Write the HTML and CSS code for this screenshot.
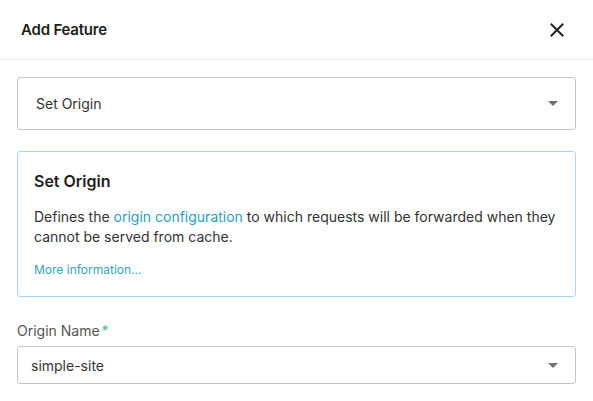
FILE: index.html
```html
<!DOCTYPE html>
<html>
<head>
<meta charset="utf-8">
<link rel="stylesheet" href="styles.css">
</head>
<body>
<div class="dialog">
  <div class="header">
    <span class="title">Add Feature</span>
    <button class="close" aria-label="Close">
      <svg width="14" height="14" viewBox="0 0 14 14"><path d="M1.5 1.5 L12.5 12.5 M12.5 1.5 L1.5 12.5" stroke="#222" stroke-width="2" stroke-linecap="square"/></svg>
    </button>
  </div>
  <div class="content">
    <div class="select big">
      <span>Set Origin</span>
      <span class="arrow"></span>
    </div>
    <div class="card">
      <div class="card-title">Set Origin</div>
      <p class="card-text">Defines the <a class="link">origin configuration</a> to which requests will be forwarded when they cannot be served from cache.</p>
      <a class="more">More information...</a>
    </div>
    <div class="field">
      <label class="label">Origin Name<span class="req">*</span></label>
      <div class="select small">
        <span>simple-site</span>
        <span class="arrow"></span>
      </div>
    </div>
  </div>
</div>
</body>
</html>
```
FILE: styles.css
```css
* { box-sizing: border-box; }
body {
  margin: 0;
  background: #fff;
  font-family: Inter, "Noto Sans", sans-serif;
  color: #222;
}
.dialog { width: 593px; }
.header {
  height: 60px;
  border-bottom: 1px solid #ececec;
  display: flex;
  align-items: center;
  justify-content: space-between;
  padding: 0 29px 0 21px;
}
.title {
  font-size: 15px;
  font-weight: 600;
  letter-spacing: -0.2px;
  color: #1d1d1d;
}
.close {
  border: 0;
  background: none;
  padding: 0;
  width: 14px;
  height: 14px;
  display: flex;
}
.content {
  padding: 17px 17px 0 17px;
  display: flex;
  flex-direction: column;
}
.select {
  border: 1px solid #c6c6c6;
  border-radius: 3px;
  display: flex;
  align-items: center;
  justify-content: space-between;
  font-size: 14px;
  color: #333;
}
.select.big { height: 53px; padding: 0 17px 0 18px; }
.select.small { height: 38px; padding: 0 17px 0 13px; }
.arrow {
  width: 0; height: 0;
  border-left: 5px solid transparent;
  border-right: 5px solid transparent;
  border-top: 5px solid #707070;
}
.card {
  margin-top: 21px;
  border: 1px solid #a8d5f7;
  border-radius: 3px;
  padding: 19px 16px 16px 16px;
  height: 146px;
}
.card-title {
  font-size: 16px;
  font-weight: 600;
  color: #1d1d1d;
  line-height: 20px;
}
.card-text {
  margin: 16px 0 0 0;
  font-size: 14px;
  line-height: 20px;
  color: #333;
}
.link { color: #2a9fb8; }
.more {
  display: block;
  margin-top: 15px;
  font-size: 12px;
  line-height: 16px;
  color: #36a3bd;
}
.field { margin-top: 24px; display: flex; flex-direction: column; }
.label {
  font-size: 14px;
  line-height: 20px;
  color: #555;
  margin-bottom: 5px;
}
.req { color: #3dbca0; margin-left: 2px; }
```
